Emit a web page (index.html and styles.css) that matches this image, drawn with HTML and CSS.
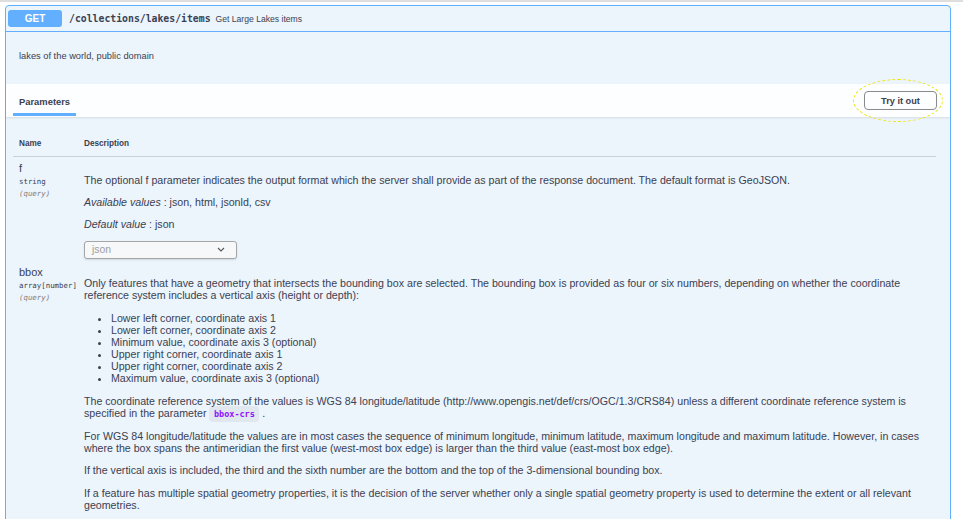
FILE: index.html
```html
<!DOCTYPE html>
<html>
<head>
<meta charset="utf-8">
<link rel="stylesheet" href="styles.css">
</head>
<body>
<div class="topline"></div>
<div class="opblock">
  <div class="summary">
    <span class="method">GET</span>
    <span class="path">/collections/lakes/items</span>
    <span class="sumdesc">Get Large Lakes items</span>
  </div>
  <div class="opdesc">lakes of the world, public domain</div>
  <div class="sechead">
    <div class="tab">Parameters</div>
    <div class="tryout">
      <button class="btn">Try it out</button>
      <span class="ring"></span>
    </div>
  </div>
  <div class="params">
    <div class="thead">
      <div class="th-name">Name</div>
      <div class="th-desc">Description</div>
    </div>
    <div class="prow">
      <div class="pname">
        <div class="nm">f</div>
        <div class="ptype">string</div>
        <div class="pin">(query)</div>
      </div>
      <div class="pdesc">
        <p>The optional f parameter indicates the output format which the server shall provide as part of the response document. The default format is GeoJSON.</p>
        <p><i>Available values</i> : json, html, jsonld, csv</p>
        <p><i>Default value</i> : json</p>
        <div class="select">
          <span>json</span>
          <svg class="chev" width="8" height="5" viewBox="0 0 8 5"><path d="M1 1 L4 4 L7 1" fill="none" stroke="#555" stroke-width="1.1"/></svg>
        </div>
      </div>
    </div>
    <div class="prow">
      <div class="pname">
        <div class="nm">bbox</div>
        <div class="ptype">array[number]</div>
        <div class="pin">(query)</div>
      </div>
      <div class="pdesc">
        <p>Only features that have a geometry that intersects the bounding box are selected. The bounding box is provided as four or six numbers, depending on whether the coordinate reference system includes a vertical axis (height or depth):</p>
        <ul>
          <li>Lower left corner, coordinate axis 1</li>
          <li>Lower left corner, coordinate axis 2</li>
          <li>Minimum value, coordinate axis 3 (optional)</li>
          <li>Upper right corner, coordinate axis 1</li>
          <li>Upper right corner, coordinate axis 2</li>
          <li>Maximum value, coordinate axis 3 (optional)</li>
        </ul>
        <p>The coordinate reference system of the values is WGS 84 longitude/latitude (http://www.opengis.net/def/crs/OGC/1.3/CRS84) unless a different coordinate reference system is specified in the parameter <code>bbox-crs</code> .</p>
        <p>For WGS 84 longitude/latitude the values are in most cases the sequence of minimum longitude, minimum latitude, maximum longitude and maximum latitude. However, in cases where the box spans the antimeridian the first value (west-most box edge) is larger than the third value (east-most box edge).</p>
        <p>If the vertical axis is included, the third and the sixth number are the bottom and the top of the 3-dimensional bounding box.</p>
        <p>If a feature has multiple spatial geometry properties, it is the decision of the server whether only a single spatial geometry property is used to determine the extent or all relevant geometries.</p>
      </div>
    </div>
  </div>
</div>
</body>
</html>
```

FILE: styles.css
```css
html, body {
  margin: 0;
  padding: 0;
  background: #ffffff;
}
body {
  font-family: "Liberation Sans", Arial, sans-serif;
  color: #3b4151;
  overflow: hidden;
  height: 519px;
}
.topline {
  height: 2px;
  background: #dedede;
}
.opblock {
  margin: 3px 12px 0 5px;
  border: 1px solid #61affe;
  border-radius: 4px 4px 0 0;
  background: #ecf4fc;
  height: 600px;
}
.summary {
  display: flex;
  align-items: center;
  padding: 4px 2px;
  border-bottom: 1px solid #61affe;
}
.method {
  width: 54px;
  height: 17px;
  line-height: 17px;
  text-align: center;
  background: #61affe;
  color: #ffffff;
  border-radius: 3px;
  font-weight: bold;
  font-size: 10px;
}
.path {
  margin-left: 7px;
  font-family: "DejaVu Sans Mono", "Liberation Mono", monospace;
  font-weight: 600;
  font-size: 9.8px;
  color: #3b4151;
}
.sumdesc {
  margin-left: 5px;
  font-size: 8.6px;
  color: #3b4151;
}
.opdesc {
  padding: 18px 13px 22px;
  font-size: 9.3px;
  line-height: 12px;
}
.sechead {
  display: flex;
  align-items: center;
  justify-content: space-between;
  height: 33px;
  padding: 0 13px 0 7px;
  background: rgba(255, 255, 255, 0.85);
  box-shadow: 0 1px 2px rgba(0, 0, 0, 0.1);
}
.tab {
  position: relative;
  align-self: stretch;
  display: flex;
  align-items: center;
  padding: 2px 6px 0;
  font-weight: bold;
  font-size: 9.4px;
}
.tab::after {
  content: "";
  position: absolute;
  left: 0;
  right: 0;
  bottom: 1px;
  height: 3px;
  background: #61affe;
}
.tryout {
  position: relative;
  display: flex;
}
.btn {
  width: 73px;
  height: 19px;
  padding: 0;
  border: 1.5px solid #8a8a8a;
  border-radius: 4px;
  background: transparent;
  font-family: "Liberation Sans", Arial, sans-serif;
  font-weight: bold;
  font-size: 9.2px;
  color: #3b4151;
}
.ring {
  position: absolute;
  left: -11px;
  right: -6px;
  top: -12px;
  bottom: -12px;
  border: 1.3px dashed #f0e400;
  border-radius: 50%;
  pointer-events: none;
}
.params {
  padding: 21px 14px 0 7px;
}
.thead {
  display: grid;
  grid-template-columns: 71px 1fr;
  padding-bottom: 6px;
  border-bottom: 1px solid rgba(59, 65, 81, 0.2);
  font-weight: bold;
  font-size: 8.2px;
  line-height: 12px;
}
.th-name {
  padding-left: 6px;
}
.prow {
  display: grid;
  grid-template-columns: 71px 1fr;
}
.pname {
  padding: 5px 0 0 6px;
}
.nm {
  font-size: 11px;
  line-height: 13px;
}
.ptype {
  padding-top: 1px;
  font-family: "DejaVu Sans Mono", "Liberation Mono", monospace;
  font-size: 7.4px;
  line-height: 12px;
}
.pin {
  font-family: "DejaVu Sans Mono", "Liberation Mono", monospace;
  font-style: italic;
  font-size: 7.4px;
  line-height: 12px;
  color: #808080;
}
.pdesc {
  padding: 16.5px 0 2px 0;
  font-size: 10.65px;
  line-height: 12px;
}
.pdesc p {
  margin: 0 0 10.4px;
}
.pdesc ul {
  margin: 0 0 11px;
  padding-left: 27px;
}
.pdesc code {
  padding: 3px 4.5px;
  border-radius: 4px;
  background: rgba(0, 0, 0, 0.05);
  font-family: "DejaVu Sans Mono", "Liberation Mono", monospace;
  font-weight: 600;
  font-size: 8.5px;
  color: #9012fe;
}
.select {
  box-sizing: border-box;
  display: flex;
  align-items: center;
  justify-content: space-between;
  width: 153px;
  height: 18px;
  padding: 0 11px 0 7px;
  border: 1px solid #a6a6a6;
  border-radius: 3px;
  background: #f6f8fa;
  box-shadow: 0 1px 2px rgba(0, 0, 0, 0.12);
  font-size: 10.4px;
  color: #a0a0a0;
}
.chev {
  display: block;
}
```
